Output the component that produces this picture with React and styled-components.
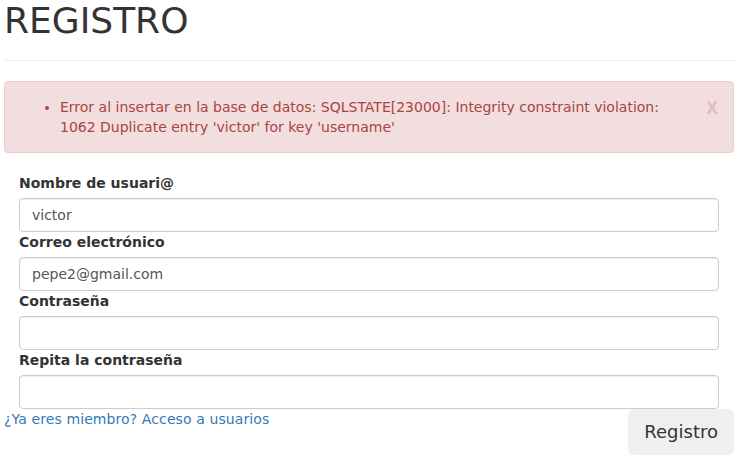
import React from "react";
import styled, { createGlobalStyle } from "styled-components";

const GlobalStyle = createGlobalStyle`
	* { box-sizing: border-box; }
	body {
		margin: 0;
		background: #fff;
		font-family: "DejaVu Sans", "Liberation Sans", sans-serif;
		font-size: 14px;
		line-height: 1.42857;
		color: #333;
	}
`;

const Container = styled.div`
	width: 730px;
	margin-left: 4px;
`;

const PageHeader = styled.div`
	padding-bottom: 9px;
	border-bottom: 1px solid #eee;
	margin-bottom: 20px;
`;

const Title = styled.h1`
	margin: 1px 0 10px;
	font-size: 36px;
	font-weight: 500;
	line-height: 1.1;
	color: #333;
`;

const Alert = styled.div`
	display: flex;
	align-items: flex-start;
	padding: 15px;
	border: 1px solid #ebccd1;
	border-radius: 4px;
	background: #f2dede;
	color: #a94442;
	font-size: 14px;
	margin-bottom: 20px;
`;

const Messages = styled.ul`
	flex: 1;
	margin: 0;
	padding-left: 40px;
	padding-right: 8px;
	line-height: 20px;
`;

const Close = styled.button`
	border: 0;
	background: none;
	padding: 0;
	margin-top: 3px;
	font-family: "DejaVu Sans Condensed", "DejaVu Sans", sans-serif;
	font-size: 17px;
	font-weight: 700;
	line-height: 1;
	color: #a94442;
	opacity: 0.2;
	cursor: pointer;
`;

const Form = styled.form`
	padding: 0 15px;
`;

const Group = styled.div`
	display: flex;
	flex-direction: column;
`;

const Label = styled.label`
	font-weight: 700;
	line-height: 20px;
	margin-bottom: 5px;
`;

const Input = styled.input`
	height: 34px;
	padding: 6px 12px;
	border: 1px solid #ccc;
	border-radius: 4px;
	font-family: "DejaVu Sans", sans-serif;
	font-size: 14px;
	color: #555;
	box-shadow: inset 0 1px 1px rgba(0, 0, 0, 0.075);
`;

const Footer = styled.div`
	display: flex;
	justify-content: space-between;
	align-items: flex-start;
`;

const Link = styled.a`
	color: #337ab7;
	text-decoration: none;
	line-height: 20px;
	letter-spacing: 0.1px;
`;

const Button = styled.button`
	padding: 10px 16px;
	border: 0;
	border-radius: 6px;
	background: #f0efee;
	font-family: "DejaVu Sans", sans-serif;
	font-size: 18px;
	line-height: 26px;
	color: #333;
	cursor: pointer;
`;

const fields = [
	{ label: "Nombre de usuari@", type: "text", value: "victor" },
	{ label: "Correo electrónico", type: "email", value: "pepe2@gmail.com" },
	{ label: "Contraseña", type: "password", value: "" },
	{ label: "Repita la contraseña", type: "password", value: "" },
];

const App = () => {
	return (
		<>
			<GlobalStyle />
			<Container>
				<PageHeader>
					<Title>REGISTRO</Title>
				</PageHeader>
				<Alert>
					<Messages>
						<li>
							Error al insertar en la base de datos: SQLSTATE[23000]: Integrity
							constraint violation: 1062 Duplicate entry 'victor' for key
							'username'
						</li>
					</Messages>
					<Close type='button'>X</Close>
				</Alert>
				<Form>
					{fields.map((f) => (
						<Group key={f.label}>
							<Label>{f.label}</Label>
							<Input type={f.type} defaultValue={f.value} />
						</Group>
					))}
				</Form>
				<Footer>
					<Link href='#'>¿Ya eres miembro? Acceso a usuarios</Link>
					<Button type='button'>Registro</Button>
				</Footer>
			</Container>
		</>
	);
};

export default App;
